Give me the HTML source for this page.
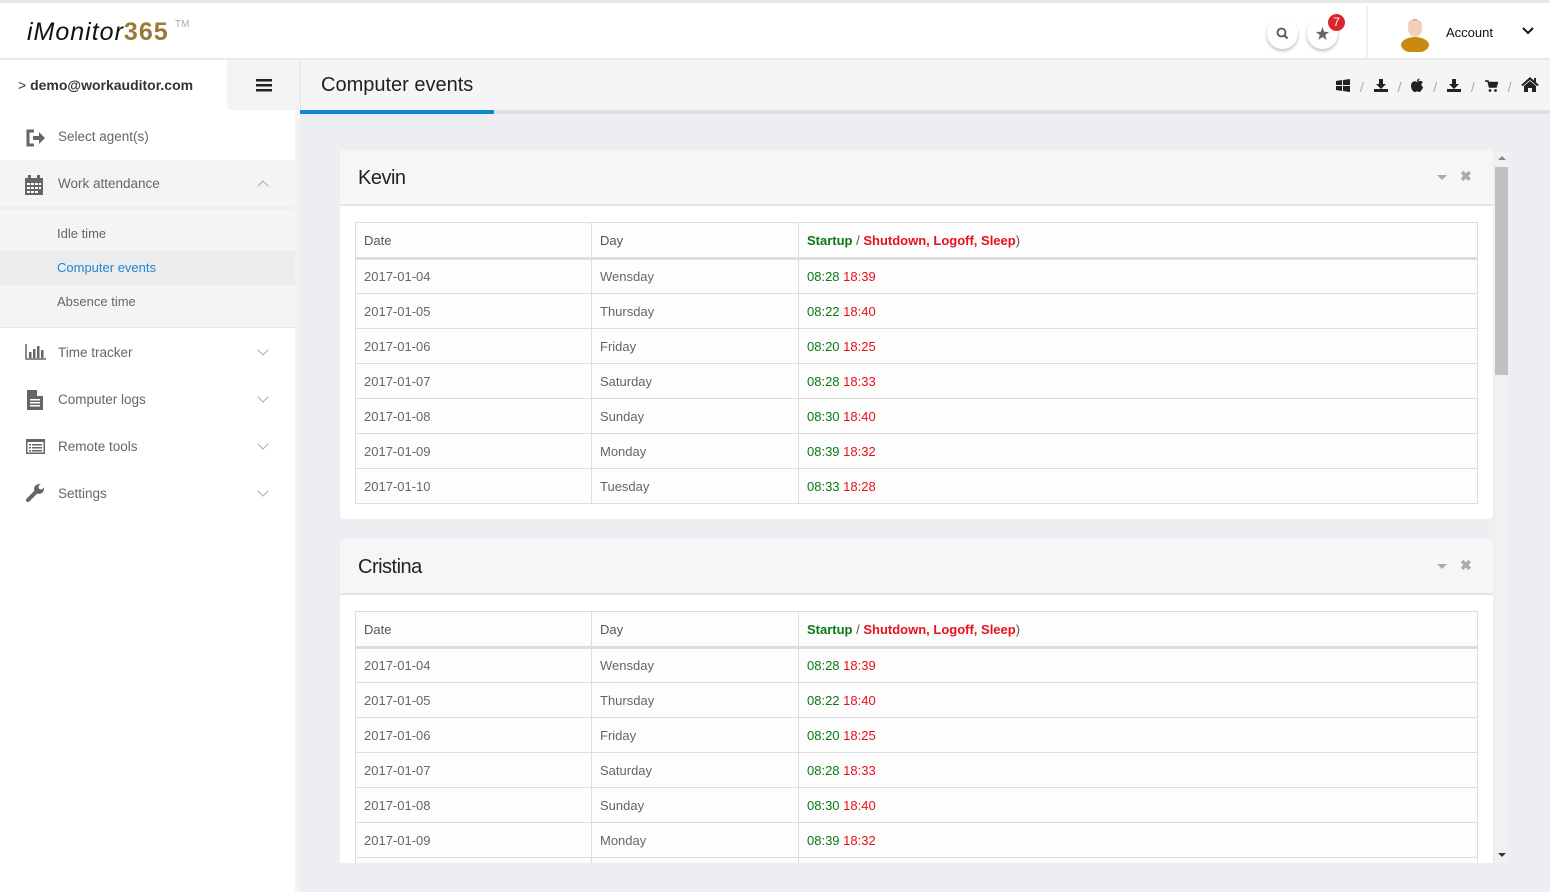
<!DOCTYPE html>
<html><head><style>
*{box-sizing:border-box;margin:0;padding:0}
body{width:1550px;height:892px;overflow:hidden;font-family:"Liberation Sans",sans-serif;background:#eceef2;position:relative}
.topline{position:absolute;left:0;top:0;width:1550px;height:3px;background:#e8e8e8}
.header{position:absolute;left:0;top:3px;width:1550px;height:56px;background:#fff;border-bottom:1px solid #e6e6e6}
.logo{position:absolute;left:27px;top:15px;font-size:25px;font-style:italic;color:#111;font-family:"Liberation Sans",sans-serif;letter-spacing:1px}
.logo b{color:#9a7a3a;font-style:normal;font-weight:bold}
.tm{position:absolute;left:175px;top:16px;font-size:10px;color:#aaa}
.circ{position:absolute;top:15px;width:31px;height:31px;border-radius:50%;background:#fff;box-shadow:0 2px 3px rgba(0,0,0,.25)}
.badge{position:absolute;left:1328px;top:14px;width:17px;height:17px;border-radius:50%;background:#d9262c;color:#fff;font-size:12px;text-align:center;line-height:17px}
.vsep{position:absolute;left:1366px;top:3px;width:2px;height:56px;background:#efefef}
.side{position:absolute;left:0;top:60px;width:295px;height:832px;background:#fff}
.sidestrip{position:absolute;left:295px;top:110px;width:5px;height:782px;background:#f3f3f3}
.user{position:absolute;left:18px;top:77px;font-size:14px;color:#333;font-weight:bold}
.burger{position:absolute;left:227px;top:60px;width:73px;height:50px;background:#f3f3f3;border-radius:0 0 0 4px}
.mi{position:absolute;left:58px;font-size:13.5px;color:#666}
.ico{position:absolute;left:25px}
.chev{position:absolute;left:259px;width:8px;height:8px;border-right:1.5px solid #aaa;border-bottom:1.5px solid #aaa;transform:rotate(45deg)}
.titlebar{position:absolute;left:300px;top:60px;width:1250px;height:50px;background:#f5f5f6;border-left:1px solid #e6e6e6}
.titlebar h1{position:absolute;left:20px;top:14px;font-size:20px;font-weight:normal;color:#222}
.tbline{position:absolute;left:300px;top:110px;width:1250px;height:4px;background:#e0e0e3}
.tbblue{position:absolute;left:300px;top:110px;width:194px;height:4px;background:#0b86d0}
.clip{position:absolute;left:300px;top:114px;width:1250px;height:749px;overflow:hidden}
.panel{position:absolute;left:40px;width:1153px;background:#fff;border-radius:4px}
.ph{height:56px;background:#f6f6f6;border-bottom:2px solid #e5e5e5;border-radius:4px 4px 0 0;position:relative}
.ph span{position:absolute;left:18px;top:17px;font-size:20px;color:#222;letter-spacing:-0.5px}
.ph .x{position:absolute;left:1120px;top:18px;font-size:14px;color:#aaa;font-weight:bold}
.ph .dn{position:absolute;left:1097px;top:25px;width:0;height:0;border-left:5px solid transparent;border-right:5px solid transparent;border-top:5px solid #aaa}
table{position:absolute;left:15px;top:72px;width:1123px;border-collapse:collapse;background:#fdfdfd;font-size:13px;color:#666}
td,th{border:1px solid #ddd;height:35px;padding:0 8px;text-align:left;font-weight:normal}
th{color:#555;height:36px;border-bottom:3px solid #ddd}
.g{color:#0a7a12}.r{color:#e8101a}
th .g,th .r{font-weight:bold}
.sb{position:absolute;left:1495px;top:152px;width:13px;height:711px;background:#f1f1f1}
.sbt{position:absolute;left:1495px;top:167px;width:13px;height:208px;background:#c1c1c1}
</style></head><body>
<div class="topline"></div>
<div class="header">
<div class="logo">iMonitor<b>365</b></div><div class="tm">TM</div>
<div class="circ" style="left:1267px"><svg width="31" height="31"><circle cx="14.5" cy="14.5" r="4" fill="none" stroke="#555" stroke-width="1.8"/><line x1="17.5" y1="17.5" x2="20.5" y2="20.5" stroke="#555" stroke-width="2"/></svg></div>
<div class="circ" style="left:1307px"><svg width="31" height="31"><polygon points="15.5,9 17.2,13.8 22,14 18.2,17 19.6,22 15.5,19 11.4,22 12.8,17 9,14 13.8,13.8" fill="#666"/></svg></div>
<div class="vsep"></div>
<svg style="position:absolute;left:1398px;top:11px" width="34" height="38"><ellipse cx="17" cy="31" rx="14" ry="8" fill="#c98a12"/><ellipse cx="17" cy="14" rx="7" ry="9" fill="#f2d0b8"/><path d="M10 11 Q17 0 24 11 Q22 6 17 6 Q12 6 10 11Z" fill="#8b4a2a"/></svg>
<div style="position:absolute;left:1446px;top:22px;font-size:13px;color:#111">Account</div>
<svg style="position:absolute;left:1522px;top:24px" width="12" height="8"><path d="M1 1 L6 6 L11 1" fill="none" stroke="#111" stroke-width="2"/></svg>
</div>
<div class="side"></div>
<div class="sidestrip"></div>
<div class="user"><span style="font-weight:normal">&gt;</span> demo@workauditor.com</div>
<div class="burger"><svg style="position:absolute;left:29px;top:19px" width="16" height="13"><rect y="0" width="16" height="2.5" fill="#222"/><rect y="5" width="16" height="2.5" fill="#222"/><rect y="10" width="16" height="2.5" fill="#222"/></svg></div>
<svg class="ico" style="top:128px" width="22" height="20"><path d="M9 3 H3 V17 H9" fill="none" stroke="#666" stroke-width="3"/><path d="M8 8 H14 V4 L20 10 L14 16 V12 H8Z" fill="#666"/></svg>
<div class="mi" style="top:129px">Select agent(s)</div>
<div style="position:absolute;left:0;top:160px;width:295px;height:168px;background:#f4f4f4"></div>
<div style="position:absolute;left:0;top:207px;width:295px;height:2px;background:#ededed"></div>
<div style="position:absolute;left:0;top:251px;width:295px;height:34px;background:#ececec"></div>
<div style="position:absolute;left:0;top:327px;width:295px;height:1px;background:#e6e6e6"></div>
<svg class="ico" style="top:175px" width="18" height="20"><rect x="0" y="3" width="18" height="17" fill="#666"/><rect x="3" y="0" width="3" height="5" fill="#666"/><rect x="12" y="0" width="3" height="5" fill="#666"/><g fill="#fff"><rect x="2" y="8" width="3" height="2"/><rect x="6" y="8" width="3" height="2"/><rect x="10" y="8" width="3" height="2"/><rect x="14" y="8" width="2" height="2"/><rect x="2" y="12" width="3" height="2"/><rect x="6" y="12" width="3" height="2"/><rect x="10" y="12" width="3" height="2"/><rect x="14" y="12" width="2" height="2"/><rect x="2" y="16" width="3" height="2"/><rect x="6" y="16" width="3" height="2"/><rect x="10" y="16" width="3" height="2"/></g></svg>
<div class="mi" style="top:176px">Work attendance</div>
<div class="chev" style="top:182px;transform:rotate(-135deg)"></div>
<div class="mi" style="left:57px;top:226px;font-size:13px">Idle time</div>
<div class="mi" style="left:57px;top:260px;font-size:13px;color:#1f86d6">Computer events</div>
<div class="mi" style="left:57px;top:294px;font-size:13px">Absence time</div>
<svg class="ico" style="top:344px" width="21" height="16"><path d="M1 0 V15 H21" fill="none" stroke="#666" stroke-width="1.5"/><rect x="4" y="8" width="2.5" height="6" fill="#666"/><rect x="8" y="5" width="2.5" height="9" fill="#666"/><rect x="12" y="2" width="2.5" height="12" fill="#666"/><rect x="16" y="6" width="2.5" height="8" fill="#666"/></svg>
<div class="mi" style="top:345px">Time tracker</div><div class="chev" style="top:346px"></div>
<svg class="ico" style="left:27px;top:390px" width="16" height="20"><path d="M0 0 H10 L16 6 V20 H0Z" fill="#666"/><path d="M10 0 V6 H16" fill="#fff"/><g fill="#fff"><rect x="3" y="9" width="10" height="1.5"/><rect x="3" y="12" width="10" height="1.5"/><rect x="3" y="15" width="10" height="1.5"/></g></svg>
<div class="mi" style="top:392px">Computer logs</div><div class="chev" style="top:393px"></div>
<svg class="ico" style="left:26px;top:439px" width="19" height="15"><rect x="0.75" y="0.75" width="17.5" height="13.5" fill="none" stroke="#666" stroke-width="1.5"/><rect x="0" y="0" width="19" height="3" fill="#666"/><g fill="#666"><rect x="3" y="5" width="2" height="1.5"/><rect x="6" y="5" width="10" height="1.5"/><rect x="3" y="8" width="2" height="1.5"/><rect x="6" y="8" width="10" height="1.5"/><rect x="3" y="11" width="2" height="1.5"/><rect x="6" y="11" width="10" height="1.5"/></g></svg>
<div class="mi" style="top:439px">Remote tools</div><div class="chev" style="top:440px"></div>
<svg class="ico" style="left:26px;top:484px" width="19" height="18"><path d="M2 16 L10 8" stroke="#666" stroke-width="4" stroke-linecap="round"/><circle cx="13" cy="5" r="5" fill="#666"/><circle cx="15" cy="3" r="2.5" fill="#fff"/></svg>
<div class="mi" style="top:486px">Settings</div><div class="chev" style="top:487px"></div>

<div class="titlebar"><h1>Computer events</h1>
<div style="position:absolute;left:1035px;top:17px;font-size:14px;color:#222;letter-spacing:0">
<svg width="14" height="13"><path d="M0 2 L6 1 V6 H0Z M7 1 L14 0 V6 H7Z M0 7 H6 V12 L0 11Z M7 7 H14 V13 L7 12Z" fill="#222"/></svg>
<span style="color:#aaa;margin:0 6px">/</span>
<svg width="14" height="13"><path d="M5 0 H9 V5 H12 L7 10 L2 5 H5Z" fill="#222"/><rect x="0" y="10" width="14" height="3" fill="#222"/></svg>
<span style="color:#aaa;margin:0 6px">/</span>
<svg width="12" height="14"><path d="M6 4 C3 2 0 4 0 8 C0 11 2 14 4 14 C5 14 5 13.4 6 13.4 C7 13.4 7 14 8 14 C10 14 12 10 12 9 C10 8 10 5 12 4.5 C10 2 8 3 6 4Z M6 3.5 C6 2 7 0.5 8.5 0.5 C8.5 2 7.5 3.5 6 3.5Z" fill="#222"/></svg>
<span style="color:#aaa;margin:0 6px">/</span>
<svg width="14" height="13"><path d="M5 0 H9 V5 H12 L7 10 L2 5 H5Z" fill="#222"/><rect x="0" y="10" width="14" height="3" fill="#222"/></svg>
<span style="color:#aaa;margin:0 6px">/</span>
<svg width="13" height="12"><path d="M0 1 H3 L4.5 7 H11 L12.5 2.5 H3.5" fill="#222" stroke="#222" stroke-width="1.5"/><circle cx="5" cy="10.5" r="1.4" fill="#222"/><circle cx="10.5" cy="10.5" r="1.4" fill="#222"/></svg>
<span style="color:#aaa;margin:0 6px">/</span>
<svg width="18" height="15"><path d="M9 0 L18 8 L16 9 L9 3 L2 9 L0 8Z" fill="#222"/><path d="M3 9 L9 4 L15 9 V15 H11 V11 H7 V15 H3Z" fill="#222"/><rect x="13" y="1" width="2" height="4" fill="#222"/></svg>
</div></div>
<div class="tbline"></div><div class="tbblue"></div>

<div class="clip">
<div class="panel" style="top:36px;height:369px">
<div class="ph"><span>Kevin</span><div class="dn"></div><div class="x">✖</div></div>
<table>
<tr><th style="width:236px">Date</th><th style="width:207px">Day</th><th><span class="g">Startup</span> / <span class="r">Shutdown, Logoff, Sleep</span>)</th></tr>
<tr><td>2017-01-04</td><td>Wensday</td><td><span class="g">08:28</span> <span class="r">18:39</span></td></tr>
<tr><td>2017-01-05</td><td>Thursday</td><td><span class="g">08:22</span> <span class="r">18:40</span></td></tr>
<tr><td>2017-01-06</td><td>Friday</td><td><span class="g">08:20</span> <span class="r">18:25</span></td></tr>
<tr><td>2017-01-07</td><td>Saturday</td><td><span class="g">08:28</span> <span class="r">18:33</span></td></tr>
<tr><td>2017-01-08</td><td>Sunday</td><td><span class="g">08:30</span> <span class="r">18:40</span></td></tr>
<tr><td>2017-01-09</td><td>Monday</td><td><span class="g">08:39</span> <span class="r">18:32</span></td></tr>
<tr><td>2017-01-10</td><td>Tuesday</td><td><span class="g">08:33</span> <span class="r">18:28</span></td></tr>
</table></div>
<div class="panel" style="top:425px;height:369px">
<div class="ph"><span>Cristina</span><div class="dn"></div><div class="x">✖</div></div>
<table>
<tr><th style="width:236px">Date</th><th style="width:207px">Day</th><th><span class="g">Startup</span> / <span class="r">Shutdown, Logoff, Sleep</span>)</th></tr>
<tr><td>2017-01-04</td><td>Wensday</td><td><span class="g">08:28</span> <span class="r">18:39</span></td></tr>
<tr><td>2017-01-05</td><td>Thursday</td><td><span class="g">08:22</span> <span class="r">18:40</span></td></tr>
<tr><td>2017-01-06</td><td>Friday</td><td><span class="g">08:20</span> <span class="r">18:25</span></td></tr>
<tr><td>2017-01-07</td><td>Saturday</td><td><span class="g">08:28</span> <span class="r">18:33</span></td></tr>
<tr><td>2017-01-08</td><td>Sunday</td><td><span class="g">08:30</span> <span class="r">18:40</span></td></tr>
<tr><td>2017-01-09</td><td>Monday</td><td><span class="g">08:39</span> <span class="r">18:32</span></td></tr>
<tr><td>2017-01-10</td><td>Tuesday</td><td><span class="g">08:33</span> <span class="r">18:28</span></td></tr>
</table></div>
</div>
<div class="sb"></div><div class="sbt"></div>
<div style="position:absolute;left:1498px;top:156px;border-left:4px solid transparent;border-right:4px solid transparent;border-bottom:4px solid #888"></div>
<div style="position:absolute;left:1498px;top:853px;border-left:4px solid transparent;border-right:4px solid transparent;border-top:4px solid #333"></div>
<div class="badge">7</div>
</body></html>
